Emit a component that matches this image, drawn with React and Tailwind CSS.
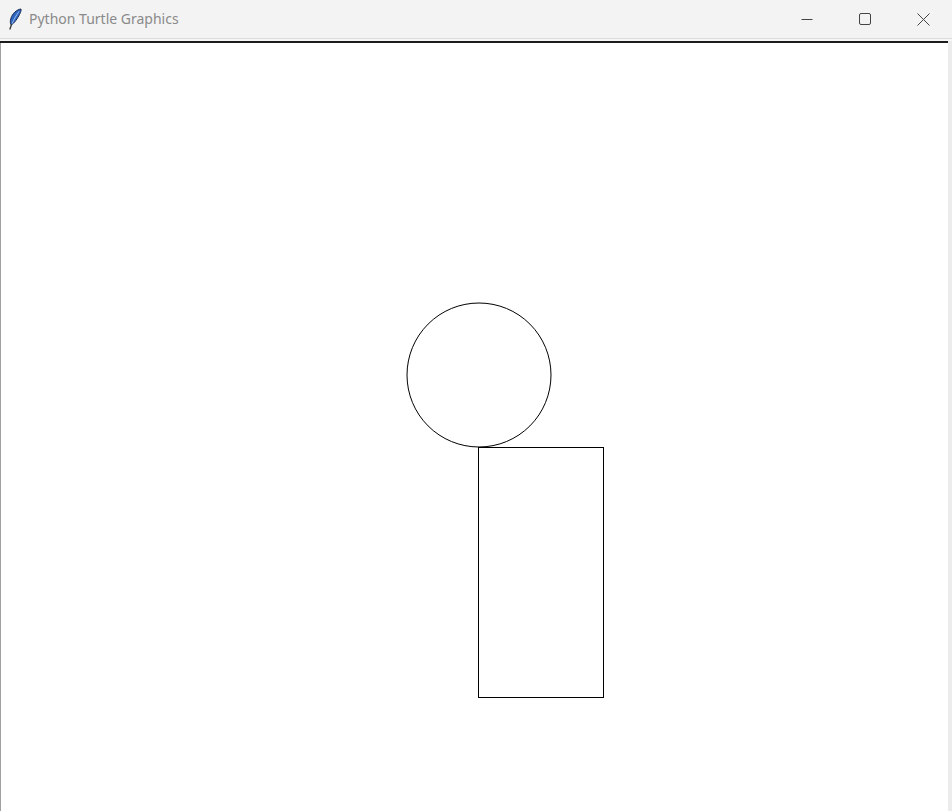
export default function App() {
  return (
    <div className="w-[952px] h-[811px] flex flex-col bg-white overflow-hidden" style={{ fontFamily: '"Segoe UI", "Noto Sans", sans-serif' }}>
      {/* Title bar */}
      <div className="h-[38px] flex items-center bg-[#f3f3f3] shrink-0">
        <div className="w-[28px] flex justify-center pl-[2px]">
          <svg width="16" height="22" viewBox="0 0 16 22">
            <path d="M14 1 C10 1.5 5.5 5 3.8 10.5 C3 13.5 3.2 15.8 4.3 17 C7.5 15 10.5 10.5 12.5 6.5 C13.8 4 14.3 2.2 14 1 Z" fill="#2f63c0" stroke="#1a2c55" strokeWidth="1" />
            <path d="M12 3.5 C9.5 7 7 11 5.2 15.5" stroke="#a8c8f2" strokeWidth="0.9" fill="none" />
            <path d="M4.5 16.5 L2.8 21.5" stroke="#333" strokeWidth="1.3" />
          </svg>
        </div>
        <span className="text-[14px] text-[#8a8a8a] ml-[1px] mt-[-1px]" style={{ fontFamily: '"Noto Sans", sans-serif' }}>Python Turtle Graphics</span>
        <div className="ml-auto flex h-full">
          <div className="w-[58px] flex items-center justify-center">
            <svg width="12" height="12" viewBox="0 0 12 12"><path d="M0.5 6.5 H11.5" stroke="#444" strokeWidth="1" /></svg>
          </div>
          <div className="w-[58px] flex items-center justify-center">
            <svg width="12" height="12" viewBox="0 0 12 12"><rect x="0.5" y="0.5" width="11" height="11" rx="1.5" fill="none" stroke="#444" strokeWidth="1" /></svg>
          </div>
          <div className="w-[58px] flex items-center justify-center">
            <svg width="13" height="13" viewBox="0 0 13 13"><path d="M0.5 0.5 L12.5 12.5 M12.5 0.5 L0.5 12.5" stroke="#444" strokeWidth="1" /></svg>
          </div>
        </div>
      </div>
      {/* Separator lines */}
      <div className="h-[1px] bg-[#dcdcdc] shrink-0" />
      <div className="h-[2px] bg-[#f6f6f6] shrink-0" />
      <div className="flex shrink-0">
        <div className="w-[948px] h-[2px] bg-[#1c1c1c]" />
        <div className="flex-1 bg-[#ececec]" />
      </div>
      {/* Canvas */}
      <div className="flex-1 flex">
        <div className="w-[1px] bg-[#a0a0a0]" />
        <div className="w-[947px] bg-white">
          <svg width="947" height="768" viewBox="0 0 947 768">
            <circle cx="478" cy="332" r="72" fill="none" stroke="#000" strokeWidth="1" />
            <rect x="477.5" y="404.5" width="125" height="250" fill="none" stroke="#000" strokeWidth="1" />
          </svg>
        </div>
        <div className="flex-1 bg-[#ececec]" />
      </div>
    </div>
  );
}
